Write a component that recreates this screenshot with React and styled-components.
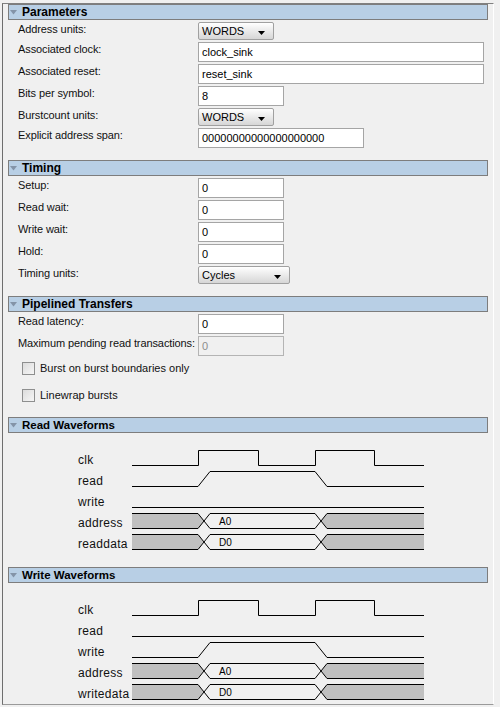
import React from "react";
import styled, { createGlobalStyle } from "styled-components";

const GlobalStyle = createGlobalStyle`
  html, body { margin: 0; padding: 0; background: #f0f0f0; }
  body { font-family: "Liberation Sans", Arial, sans-serif; }
`;

const Page = styled.div`
  width: 500px;
  height: 707px;
  box-sizing: border-box;
  padding: 3px 0 0 2px;
  background: #f0f0f0;
  overflow: hidden;
`;

const Frame = styled.div`
  width: 492px;
  height: 702px;
  box-sizing: border-box;
  border-top: 1px solid #808080;
  border-left: 1px solid #6e6e6e;
  border-right: 1px solid #ffffff;
  border-bottom: 1px solid #9a9a9a;
  overflow: hidden;
`;

const Section = styled.section`
  padding-bottom: ${(p) => p.$gap}px;
`;

const Header = styled.div`
  margin-left: 5px;
  width: 480px;
  height: 16px;
  box-sizing: border-box;
  border: 1px solid #7d7d7d;
  background: #b8cfe5;
  display: flex;
  align-items: center;
  gap: 5px;
  padding-left: 1px;
  font-weight: bold;
  font-size: ${(p) => (p.$small ? 11.5 : 12)}px;
  color: #000;
  white-space: nowrap;
`;

const Fields = styled.div`
  display: flex;
  flex-direction: column;
  gap: 2px;
  padding-top: 2px;
`;

const Row = styled.div`
  display: flex;
  align-items: flex-start;
`;

const Label = styled.label`
  width: 195px;
  flex: none;
  box-sizing: border-box;
  padding: 1px 0 0 15px;
  font-size: 11px;
  line-height: 13px;
  letter-spacing: -0.1px;
  color: #111;
  white-space: nowrap;
`;

const TextBox = styled.div`
  width: ${(p) => p.$w}px;
  height: 20px;
  box-sizing: border-box;
  border: 1px solid ${(p) => (p.$disabled ? "#b4b4b4" : "#a5a5a5")};
  background: ${(p) => (p.$disabled ? "#f0f0f0" : "#ffffff")};
  color: ${(p) => (p.$disabled ? "#8d8d8d" : "#000")};
  font-size: 11px;
  line-height: 18px;
  padding-left: 3px;
  white-space: nowrap;
  overflow: hidden;
`;

const Select = styled.div`
  width: ${(p) => p.$w}px;
  height: 18px;
  box-sizing: border-box;
  border: 1px solid #a0a0a0;
  border-radius: 2px;
  background: linear-gradient(#ffffff, #e6e6e6 60%, #d6d6d6);
  display: flex;
  align-items: center;
  justify-content: space-between;
  padding: 0 8px 0 3px;
  font-size: 11px;
  color: #000;
`;

const Arrow = styled.svg`
  margin-top: 4px;
`;

const CheckRow = styled.div`
  height: 25px;
  display: flex;
  align-items: flex-start;
  gap: 5px;
  padding: 4px 0 0 19px;
  box-sizing: border-box;
  font-size: 11px;
  line-height: 13px;
  color: #111;
`;

const Box = styled.span`
  width: 13px;
  height: 13px;
  box-sizing: border-box;
  border: 1px solid #8e8f8f;
  background: linear-gradient(135deg, #dcdcdc, #f6f6f6);
  flex: none;
`;

const Wave = styled.div`
  padding-top: 16px;
`;

const SignalRow = styled.div`
  display: flex;
  height: 21px;
`;

const SignalName = styled.div`
  width: 54px;
  margin-left: 75px;
  flex: none;
  box-sizing: border-box;
  padding-top: 2px;
  font-size: 12px;
  line-height: 19px;
  letter-spacing: 0.3px;
  color: #111;
`;

const Triangle = () => (
  <svg width="7" height="5" viewBox="0 0 7 5">
    <path d="M0 0 H7 L3.5 4.5 Z" fill="#8494a8" />
  </svg>
);

const Dropdown = ({ w, value }) => (
  <Select $w={w}>
    <span>{value}</span>
    <Arrow width="7" height="4" viewBox="0 0 7 4">
      <path d="M0 0 H7 L3.5 4 Z" fill="#000" />
    </Arrow>
  </Select>
);

const W = 292;
const LO = 16.5;
const HI = 1.5;

const waves = {
  clk: `M0 ${LO} H66.5 V${HI} H126.5 V${LO} H183.5 V${HI} H242.5 V${LO} H${W}`,
  pulse: `M0 ${LO} H66 L78 ${HI} H183 L195 ${LO} H${W}`,
  low: `M0 ${LO} H${W}`,
};

const Signal = ({ name, kind, text }) => (
  <SignalRow>
    <SignalName>{name}</SignalName>
    <svg width={W} height="21" viewBox={`0 0 ${W} 21`}>
      {kind === "bus" ? (
        <>
          <path d={`M0 ${HI} H66 L72 9 L66 ${LO} H0 Z`} fill="#c0c0c0" />
          <path d={`M189 9 L195 ${HI} H${W} V${LO} H195 Z`} fill="#c0c0c0" />
          <path
            d={`M0 ${HI} H66 L78 ${LO} H183 L195 ${HI} H${W} M0 ${LO} H66 L78 ${HI} H183 L195 ${LO} H${W}`}
            fill="none"
            stroke="#000"
            strokeWidth="1"
          />
          <text
            x="87"
            y="12.5"
            fontSize="10"
            fontFamily="Liberation Sans, Arial, sans-serif"
            fill="#000"
          >
            {text}
          </text>
        </>
      ) : (
        <path d={waves[kind]} fill="none" stroke="#000" strokeWidth="1" />
      )}
    </svg>
  </SignalRow>
);

const Waveforms = ({ title, signals, gap }) => (
  <Section $gap={gap}>
    <Header $small>
      <Triangle />
      {title}
    </Header>
    <Wave>
      {signals.map((s) => (
        <Signal key={s.name} {...s} />
      ))}
    </Wave>
  </Section>
);

export default function App() {
  return (
    <>
      <GlobalStyle />
      <Page>
        <Frame>
          <Section $gap={12}>
            <Header>
              <Triangle />
              Parameters
            </Header>
            <Fields>
              <Row>
                <Label>Address units:</Label>
                <Dropdown w={76} value="WORDS" />
              </Row>
              <Row>
                <Label>Associated clock:</Label>
                <TextBox $w={286}>clock_sink</TextBox>
              </Row>
              <Row>
                <Label>Associated reset:</Label>
                <TextBox $w={286}>reset_sink</TextBox>
              </Row>
              <Row>
                <Label>Bits per symbol:</Label>
                <TextBox $w={86}>8</TextBox>
              </Row>
              <Row>
                <Label>Burstcount units:</Label>
                <Dropdown w={76} value="WORDS" />
              </Row>
              <Row>
                <Label>Explicit address span:</Label>
                <TextBox $w={166}>00000000000000000000</TextBox>
              </Row>
            </Fields>
          </Section>

          <Section $gap={12}>
            <Header>
              <Triangle />
              Timing
            </Header>
            <Fields>
              {["Setup:", "Read wait:", "Write wait:", "Hold:"].map((l) => (
                <Row key={l}>
                  <Label>{l}</Label>
                  <TextBox $w={86}>0</TextBox>
                </Row>
              ))}
              <Row>
                <Label>Timing units:</Label>
                <Dropdown w={92} value="Cycles" />
              </Row>
            </Fields>
          </Section>

          <Section $gap={7}>
            <Header>
              <Triangle />
              Pipelined Transfers
            </Header>
            <Fields>
              <Row>
                <Label>Read latency:</Label>
                <TextBox $w={86}>0</TextBox>
              </Row>
              <Row>
                <Label>Maximum pending read transactions:</Label>
                <TextBox $w={86} $disabled>
                  0
                </TextBox>
              </Row>
              <CheckRow>
                <Box />
                Burst on burst boundaries only
              </CheckRow>
              <CheckRow>
                <Box />
                Linewrap bursts
              </CheckRow>
            </Fields>
          </Section>

          <Waveforms
            title="Read Waveforms"
            gap={13}
            signals={[
              { name: "clk", kind: "clk" },
              { name: "read", kind: "pulse" },
              { name: "write", kind: "low" },
              { name: "address", kind: "bus", text: "A0" },
              { name: "readdata", kind: "bus", text: "D0" },
            ]}
          />
          <Waveforms
            title="Write Waveforms"
            gap={0}
            signals={[
              { name: "clk", kind: "clk" },
              { name: "read", kind: "low" },
              { name: "write", kind: "pulse" },
              { name: "address", kind: "bus", text: "A0" },
              { name: "writedata", kind: "bus", text: "D0" },
            ]}
          />
        </Frame>
      </Page>
    </>
  );
}
